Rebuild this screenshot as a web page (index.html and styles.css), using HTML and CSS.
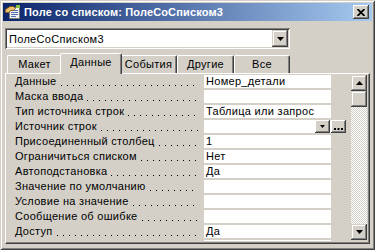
FILE: index.html
```html
<!DOCTYPE html>
<html lang="ru">
<head>
<meta charset="utf-8">
<title>Поле со списком</title>
<link rel="stylesheet" href="styles.css">
</head>
<body>
<div class="window">
  <div class="titlebar">
    <svg class="title-icon" width="16" height="16" viewBox="0 0 16 16">
      <rect x="4.5" y="3.5" width="10" height="11" fill="#f4f4f4" stroke="#7a7a7a"/>
      <rect x="6" y="6" width="7" height="1" fill="#5070b0"/>
      <rect x="6" y="8" width="7" height="1" fill="#5070b0"/>
      <rect x="6" y="10" width="7" height="1" fill="#5070b0"/>
      <rect x="6" y="12" width="5" height="1" fill="#5070b0"/>
      <rect x="11" y="1" width="4" height="3" fill="#8ac040"/>
      <path d="M0.5 5.5 L5 2.5 L8.5 2.5 L10.5 4.5 L8.5 6.5 L6 6.5 L3.5 8.5 L0.5 8.5 Z" fill="#e8c070" stroke="#8a6020"/>
    </svg>
    <span class="title-text">Поле со списком: ПолеСоСписком3</span>
    <div class="close">
      <svg width="8" height="7" viewBox="0 0 8 7"><path d="M0.5 0 L7.5 7 M7.5 0 L0.5 7" stroke="#000" stroke-width="1.8"/></svg>
    </div>
  </div>
  <div class="client">
    <div class="combo">
      <span class="combo-text">ПолеСоСписком3</span>
      <div class="combo-btn">
        <svg width="7" height="4" viewBox="0 0 7 4"><path d="M0 0H7L3.5 4Z" fill="#000"/></svg>
      </div>
    </div>
    <div class="tabs">
      <div class="tab w55">Макет</div>
      <div class="tab active w62">Данные</div>
      <div class="tab w57">События</div>
      <div class="tab w57">Другие</div>
      <div class="tab w56">Все</div>
    </div>
    <div class="panel">
      <div class="props">
        <div class="row"><div class="label"><span>Данные</span><i class="dots"></i></div><div class="value">Номер_детали</div></div>
        <div class="row"><div class="label"><span>Маска ввода</span><i class="dots"></i></div><div class="value"></div></div>
        <div class="row"><div class="label"><span>Тип источника строк</span><i class="dots"></i></div><div class="value">Таблица или запрос</div></div>
        <div class="row"><div class="label"><span>Источник строк</span><i class="dots"></i></div><div class="value split"><span class="vtext"></span><div class="mini-btn"><svg width="5" height="3" viewBox="0 0 5 3"><path d="M0 0H5L2.5 3Z" fill="#000"/></svg></div></div><div class="mini-btn builder"><svg width="9" height="2" viewBox="0 0 9 2"><rect x="0" y="0" width="2" height="2"/><rect x="3.5" y="0" width="2" height="2"/><rect x="7" y="0" width="2" height="2"/></svg></div></div>
        <div class="row"><div class="label"><span>Присоединенный столбец</span><i class="dots"></i></div><div class="value">1</div></div>
        <div class="row"><div class="label"><span>Ограничиться списком</span><i class="dots"></i></div><div class="value">Нет</div></div>
        <div class="row"><div class="label"><span>Автоподстановка</span><i class="dots"></i></div><div class="value">Да</div></div>
        <div class="row"><div class="label"><span>Значение по умолчанию</span><i class="dots"></i></div><div class="value"></div></div>
        <div class="row"><div class="label"><span>Условие на значение</span><i class="dots"></i></div><div class="value"></div></div>
        <div class="row"><div class="label"><span>Сообщение об ошибке</span><i class="dots"></i></div><div class="value"></div></div>
        <div class="row"><div class="label"><span>Доступ</span><i class="dots"></i></div><div class="value">Да</div></div>
        <div class="row"><div class="label"></div><div class="value"></div></div>
      </div>
      <div class="scrollbar">
        <div class="sb-btn"><svg width="7" height="4" viewBox="0 0 7 4"><path d="M0 4H7L3.5 0Z" fill="#000"/></svg></div>
        <div class="sb-thumb"></div>
        <div class="sb-track"></div>
        <div class="sb-btn"><svg width="7" height="4" viewBox="0 0 7 4"><path d="M0 0H7L3.5 4Z" fill="#000"/></svg></div>
      </div>
    </div>
  </div>
</div>
</body>
</html>
```
FILE: styles.css
```css
* { box-sizing: border-box; }
html, body { margin: 0; padding: 0; }
body {
  width: 375px;
  height: 250px;
  overflow: hidden;
  background: #D4D0C8;
  font-family: "Liberation Sans", Arial, sans-serif;
  font-size: 11px;
  letter-spacing: 0.3px;
  color: #000;
}
.window {
  width: 375px;
  height: 250px;
  padding: 3px;
  background: #D4D0C8;
  box-shadow: inset 1px 1px #D4D0C8, inset -1px -1px #404040, inset 2px 2px #fff, inset -2px -2px #808080;
  display: flex;
  flex-direction: column;
}
.titlebar {
  height: 18px;
  flex: none;
  display: flex;
  align-items: center;
  padding-left: 2px;
  background: linear-gradient(to right, #0A246A, #A6CAF0);
  color: #fff;
  font-weight: bold;
  font-size: 11px;
  letter-spacing: 0.15px;
}
.title-icon { flex: none; display: block; }
.title-text { margin-left: 3px; flex: 1; white-space: nowrap; }
.close, .combo-btn, .mini-btn, .sb-btn, .sb-thumb {
  background: #D4D0C8;
  box-shadow: inset -1px -1px #404040, inset 1px 1px #fff, inset -2px -2px #808080;
  display: flex;
  align-items: center;
  justify-content: center;
  flex: none;
}
.close { width: 16px; height: 14px; margin-right: 3px; }
.close svg { display: block; }
.client {
  flex: 1;
  padding: 0 2px;
  display: flex;
  flex-direction: column;
}
.combo {
  margin-top: 7px;
  height: 21px;
  width: 285px;
  background: #fff;
  box-shadow: inset 1px 1px #808080, inset -1px -1px #fff, inset 2px 2px #404040, inset -2px -2px #D4D0C8;
  display: flex;
  align-items: center;
  padding: 2px;
}
.combo-text { flex: 1; padding-left: 2px; white-space: nowrap; }
.combo-btn {
  width: 16px;
  height: 17px;
  box-shadow: inset -1px -1px #404040, inset 1px 1px #D4D0C8, inset -2px -2px #808080, inset 2px 2px #fff;
}
.tabs {
  margin-top: 4px;
  height: 20px;
  display: flex;
  align-items: flex-end;
  padding-left: 2px;
}
.tab {
  height: 18px;
  background: #D4D0C8;
  border-top: 1px solid #fff;
  border-left: 1px solid #fff;
  border-right: 1px solid #404040;
  box-shadow: inset -1px 0 #808080;
  border-radius: 2px 2px 0 0;
  display: flex;
  justify-content: center;
  padding-top: 2px;
  white-space: nowrap;
}
.w55 { width: 55px; }
.w56 { width: 56px; }
.w57 { width: 57px; }
.w62 { width: 62px; }
.tab.active {
  height: 21px;
  margin: 0 -2px -1px;
  position: relative;
  z-index: 1;
  padding-top: 2px;
}
.panel {
  height: 171px;
  border-top: 1px solid #fff;
  border-left: 1px solid #fff;
  border-right: 1px solid #404040;
  border-bottom: 1px solid #404040;
  box-shadow: inset -1px -1px #808080;
  display: flex;
  align-items: flex-start;
  padding: 0 1px 0 0;
}
.props {
  width: 341px;
  height: 167px;
  overflow: hidden;
  padding-top: 1px;
}
.row {
  display: grid;
  grid-template-columns: 198px 127px 16px;
  height: 13px;
  margin-bottom: 2px;
  line-height: 13px;
}
.label {
  display: flex;
  padding-left: 9px;
  padding-right: 6px;
  white-space: nowrap;
  overflow: hidden;
}
.dots {
  flex: 1;
  height: 13px;
  background-image: linear-gradient(to right, #000 1px, transparent 1px);
  background-size: 6px 1px;
  background-repeat: repeat-x;
  background-position: 4px 10px;
}
.value {
  background: #fff;
  padding-left: 2px;
  white-space: nowrap;
  overflow: hidden;
}
.value.split {
  display: flex;
  padding-right: 1px;
}
.vtext { flex: 1; }
.mini-btn { width: 15px; height: 13px; }
.mini-btn svg { display: block; }
.builder { align-items: flex-end; padding-bottom: 3px; }
.scrollbar {
  width: 16px;
  height: 165px;
  margin: 1px 0 0 4px;
  display: flex;
  flex-direction: column;
  background-image: conic-gradient(#fff 25%, #D4D0C8 0 50%, #fff 0 75%, #D4D0C8 0);
  background-size: 2px 2px;
}
.sb-btn, .sb-thumb {
  height: 16px;
  box-shadow: inset -1px -1px #404040, inset 1px 1px #D4D0C8, inset -2px -2px #808080, inset 2px 2px #fff;
}
.sb-track { flex: 1; }
```
